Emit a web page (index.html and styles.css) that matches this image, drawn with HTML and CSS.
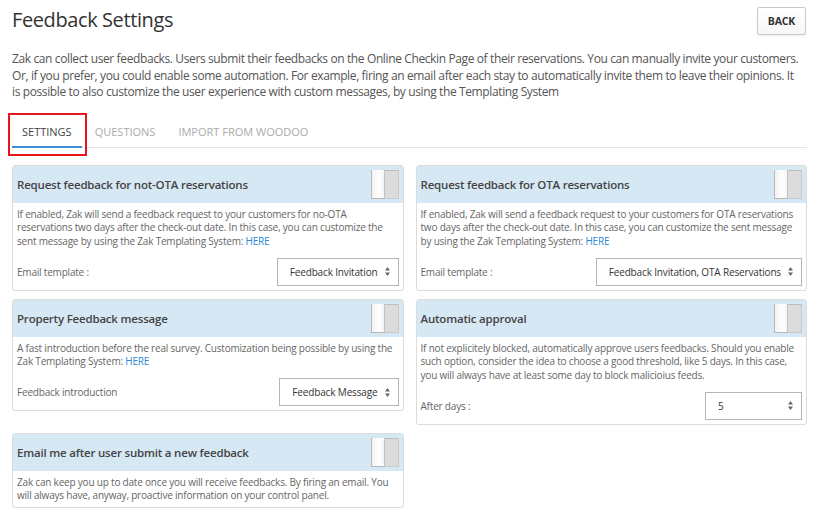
FILE: index.html
```html
<!DOCTYPE html>
<html lang="en">
<head>
<meta charset="utf-8">
<title>Feedback Settings</title>
<link rel="stylesheet" href="styles.css">
</head>
<body>
<div class="page">
  <header class="top">
    <h1 class="title">Feedback Settings</h1>
    <button class="back">BACK</button>
  </header>
  <p class="intro">Zak can collect user feedbacks. Users submit their feedbacks on the Online Checkin Page of their reservations. You can manually invite your customers. Or, if you prefer, you could enable some automation. For example, firing an email after each stay to automatically invite them to leave their opinions. It is possible to also customize the user experience with custom messages, by using the Templating System</p>
  <nav class="tabs">
    <a class="tab active">SETTINGS</a>
    <a class="tab">QUESTIONS</a>
    <a class="tab">IMPORT FROM WOODOO</a>
  </nav>
  <div class="grid">
    <section class="card">
      <div class="card-head"><h2 class="card-title">Request feedback for not-OTA reservations</h2><span class="toggle"><span class="knob"></span></span></div>
      <div class="card-body">
        <p class="desc">If enabled, Zak will send a feedback request to your customers for no-OTA reservations two days after the check-out date. In this case, you can customize the sent message by using the Zak Templating System: <a class="link">HERE</a></p>
        <div class="field"><span class="label">Email template :</span><div class="select"><span>Feedback Invitation</span><svg class="arrows" width="5" height="9" viewBox="0 0 5 9"><path d="M0 3.6L2.5 0L5 3.6Z M0 5.4L2.5 9L5 5.4Z" fill="#666"/></svg></div></div>
      </div>
    </section>
    <section class="card">
      <div class="card-head"><h2 class="card-title">Request feedback for OTA reservations</h2><span class="toggle"><span class="knob"></span></span></div>
      <div class="card-body">
        <p class="desc">If enabled, Zak will send a feedback request to your customers for OTA reservations two days after the check-out date. In this case, you can customize the sent message by using the Zak Templating System: <a class="link">HERE</a></p>
        <div class="field"><span class="label">Email template :</span><div class="select"><span>Feedback Invitation, OTA Reservations</span><svg class="arrows" width="5" height="9" viewBox="0 0 5 9"><path d="M0 3.6L2.5 0L5 3.6Z M0 5.4L2.5 9L5 5.4Z" fill="#666"/></svg></div></div>
      </div>
    </section>
    <section class="card">
      <div class="card-head"><h2 class="card-title">Property Feedback message</h2><span class="toggle"><span class="knob"></span></span></div>
      <div class="card-body">
        <p class="desc">A fast introduction before the real survey. Customization being possible by using the Zak Templating System: <a class="link">HERE</a></p>
        <div class="field"><span class="label">Feedback introduction</span><div class="select"><span>Feedback Message</span><svg class="arrows" width="5" height="9" viewBox="0 0 5 9"><path d="M0 3.6L2.5 0L5 3.6Z M0 5.4L2.5 9L5 5.4Z" fill="#666"/></svg></div></div>
      </div>
    </section>
    <section class="card">
      <div class="card-head"><h2 class="card-title">Automatic approval</h2><span class="toggle"><span class="knob"></span></span></div>
      <div class="card-body">
        <p class="desc">If not explicitely blocked, automatically approve users feedbacks. Should you enable such option, consider the idea to choose a good threshold, like 5 days. In this case, you will always have at least some day to block malicioius feeds.</p>
        <div class="field"><span class="label">After days :</span><div class="select select-days"><span>5</span><svg class="arrows" width="5" height="9" viewBox="0 0 5 9"><path d="M0 3.6L2.5 0L5 3.6Z M0 5.4L2.5 9L5 5.4Z" fill="#666"/></svg></div></div>
      </div>
    </section>
    <section class="card">
      <div class="card-head"><h2 class="card-title">Email me after user submit a new feedback</h2><span class="toggle"><span class="knob"></span></span></div>
      <div class="card-body">
        <p class="desc">Zak can keep you up to date once you will receive feedbacks. By firing an email. You will always have, anyway, proactive information on your control panel.</p>
      </div>
    </section>
  </div>
</div>
</body>
</html>
```

FILE: styles.css
```css
* { box-sizing: border-box; }
html, body { margin: 0; padding: 0; background: #fff; }
body {
  font-family: "Open Sans", "Liberation Sans", sans-serif;
  color: #555;
}
.page {
  padding: 0 8px 0 12px;
}
.top {
  display: flex;
  justify-content: space-between;
  align-items: flex-start;
  padding-top: 6px;
}
.title {
  margin: 0;
  font-size: 20px;
  letter-spacing: -0.4px;
  line-height: 28px;
  font-weight: 400;
  color: #333;
}
.back {
  margin: 1px 1px 0 0;
  height: 28px;
  padding: 0 10px;
  font-family: inherit;
  font-size: 10.5px;
  letter-spacing: -0.2px;
  font-weight: 700;
  color: #333;
  background: linear-gradient(#fff, #f7f7f7);
  border: 1px solid #c8c8c8;
  border-radius: 2px;
  box-shadow: 0 1px 1px rgba(0,0,0,0.06);
}
.intro {
  margin: 16px 5px 0 0;
  font-size: 12px;
  letter-spacing: -0.38px;
  line-height: 16.5px;
  color: #555;
}
.tabs {
  display: flex;
  gap: 3px;
  margin-top: 13px;
  border-bottom: 1px solid #e3e3e3;
}
.tab {
  position: relative;
  padding: 10px 10px 6px;
  font-size: 11px;
  line-height: 16px;
  color: #aaa;
  border-bottom: 2px solid transparent;
  margin-bottom: -1px;
}
.tab.active {
  color: #444;
  border-bottom-color: #3b8fd9;
}
.tab.active::after {
  content: "";
  position: absolute;
  left: -4px;
  right: -5px;
  top: -1px;
  bottom: -10px;
  border: 2px solid #e8141b;
}
.grid {
  display: grid;
  grid-template-columns: 1fr 1fr;
  column-gap: 12px;
  row-gap: 8px;
  align-items: start;
  margin-top: 17px;
}
.card {
  border: 1px solid #dcdcdc;
  border-radius: 3px;
  overflow: hidden;
  background: #fff;
}
.card-head {
  display: flex;
  justify-content: space-between;
  align-items: flex-start;
  height: 37px;
  padding: 4px 4px 0 4px;
  background: #d7e8f5;
}
.card-title {
  align-self: center;
  margin: -3px 0 0;
  font-size: 11.5px;
  letter-spacing: -0.2px;
  font-weight: 600;
  color: #444;
}
.toggle {
  display: flex;
  width: 28px;
  height: 29px;
  background: #dcdcdc;
  border: 1px solid #c9c9c9;
  border-top-color: #bdbdbd;
}
.knob {
  width: 14px;
  height: 29px;
  background: linear-gradient(90deg, #f2f2f2, #fff 60%, #f4f4f4);
  margin: -1px 0 -1px -1px;
  border-right: 1px solid #c2c2c2;
  border-left: 1px solid #b8b8b8;
  border-bottom: 1px solid #b8b8b8;
}
.card-body {
  padding: 5px 4px 4px 4px;
}
.desc {
  margin: 0;
  font-size: 10px;
  letter-spacing: -0.2px;
  line-height: 13.7px;
  color: #666;
}
.link {
  color: #2a88d8;
}
.field {
  display: flex;
  justify-content: space-between;
  align-items: center;
  margin-top: 9px;
}
.label {
  font-size: 10px;
  letter-spacing: -0.2px;
  color: #666;
}
.select {
  display: flex;
  align-items: center;
  justify-content: space-between;
  gap: 7px;
  height: 28px;
  padding: 0 8px 0 12px;
  border: 1px solid #b5b5b5;
  font-size: 10px;
  letter-spacing: -0.15px;
  color: #333;
  background: #fff;
}
.select-days {
  width: 97px;
}
.arrows {
  flex: none;
}
```
